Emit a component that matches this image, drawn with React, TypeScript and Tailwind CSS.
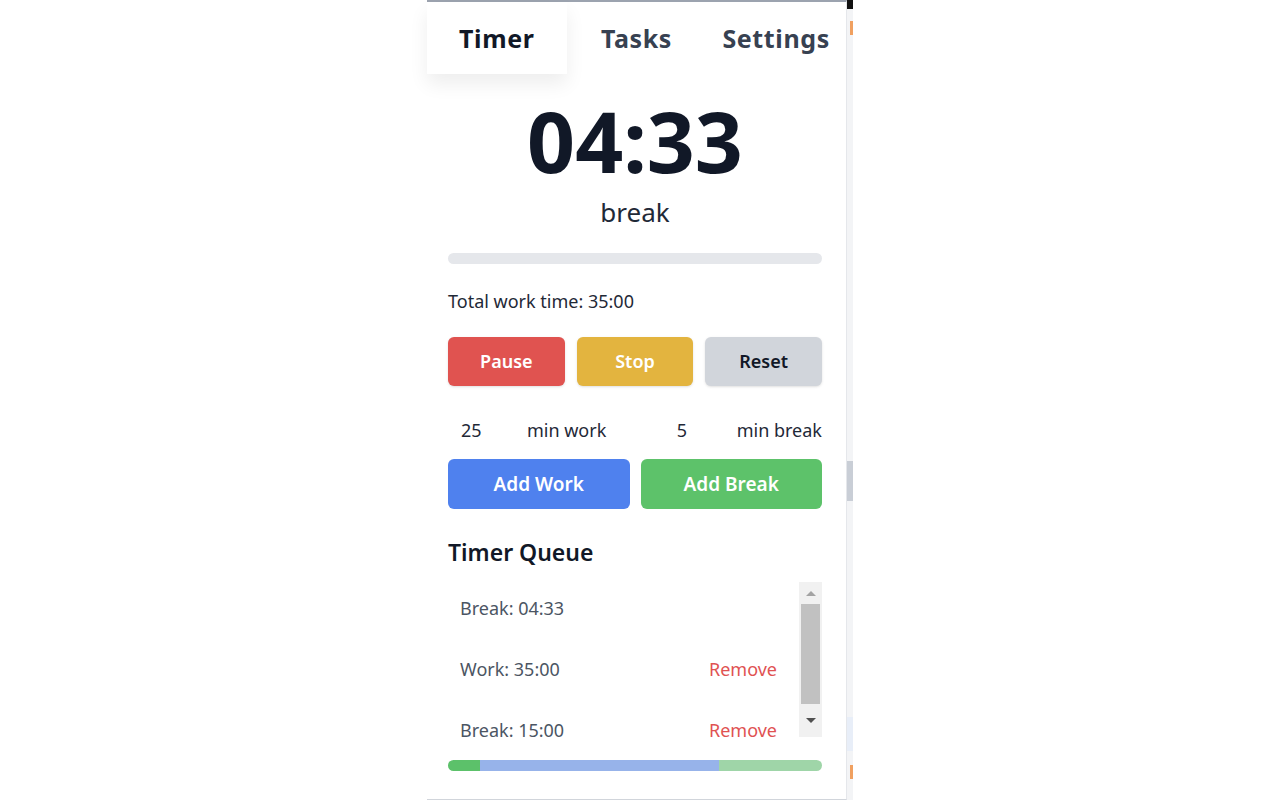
import React from "react";

const font = { fontFamily: '"Noto Sans", "Open Sans", Arial, sans-serif' };

function Tab({ label, active = false }: { label: string; active?: boolean }) {
  return (
    <div
      className={
        active
          ? "flex items-center justify-center bg-white pt-[2px] text-[25px] font-bold tracking-wide text-[#111827] shadow-[0_10px_18px_rgba(0,0,0,0.07)]"
          : "flex items-center justify-center pt-[2px] text-[25px] font-bold tracking-wide text-[#374151]"
      }
    >
      {label}
    </div>
  );
}

function QueueItem({ label, removable }: { label: string; removable: boolean }) {
  return (
    <div className="flex h-[52px] shrink-0 items-center justify-between pl-3 pr-[22px] text-[18px] text-[#4b5563]">
      <span>{label}</span>
      {removable && <span className="text-[#e05252]">Remove</span>}
    </div>
  );
}

export default function App() {
  return (
    <div className="flex min-h-screen justify-center bg-white" style={font}>
      <div className="flex h-[800px] w-[420px] flex-col border-t-2 border-r border-b border-[#9ca3af] border-r-[#e5e7eb] border-b-[#d1d5db] bg-white">
        <div className="grid h-[72px] grid-cols-3">
          <Tab label="Timer" active />
          <Tab label="Tasks" />
          <Tab label="Settings" />
        </div>

        <div className="flex flex-col pl-[21px] pr-[24px]">
          <div className="mt-[25px] text-center text-[84px] leading-[84px] font-bold text-[#111827]">04:33</div>
          <div className="mt-[12px] text-center text-[26px] leading-[34px] text-[#1f2937]">break</div>

          <div className="mt-[24px] h-[11px] rounded-full bg-[#e5e7eb]" />

          <div className="mt-[24px] text-[18px] leading-[26px] text-[#1f2937]">Total work time: 35:00</div>

          <div className="mt-[23px] grid grid-cols-3 gap-3">
            <button className="h-[49px] rounded-md bg-[#e05350] text-[18px] font-semibold text-white shadow-sm">Pause</button>
            <button className="h-[49px] rounded-md bg-[#e3b43f] text-[18px] font-semibold text-white shadow-sm">Stop</button>
            <button className="h-[49px] rounded-md bg-[#d1d5db] text-[18px] font-semibold text-[#111827] shadow-sm">Reset</button>
          </div>

          <div className="mt-[30px] flex h-[28px] items-center whitespace-nowrap text-[18px] text-[#1f2937]">
            <span className="w-[79px] pl-[13px]">25</span>
            <span className="w-[150px]">min work</span>
            <span className="w-[60px]">5</span>
            <span>min break</span>
          </div>

          <div className="mt-[15px] grid grid-cols-2 gap-[11px]">
            <button className="h-[50px] rounded-md bg-[#4f81ee] text-[19px] font-semibold text-white">Add Work</button>
            <button className="h-[50px] rounded-md bg-[#5dc26a] text-[19px] font-semibold text-white">Add Break</button>
          </div>

          <div className="mt-[28px] text-[23px] leading-[30px] font-semibold text-[#111827]">Timer Queue</div>

          <div className="mt-[15px] flex h-[155px]">
            <div className="flex flex-1 flex-col gap-[9px]">
              <QueueItem label="Break: 04:33" removable={false} />
              <QueueItem label="Work: 35:00" removable />
              <QueueItem label="Break: 15:00" removable />
            </div>
            <div className="flex w-[23px] flex-col items-center bg-[#f1f1f1]">
              <div className="flex h-[22px] items-center justify-center">
                <div className="h-0 w-0 border-x-[5px] border-b-[5px] border-x-transparent border-b-[#a3a3a3]" />
              </div>
              <div className="h-[100px] w-[19px] bg-[#c1c1c1]" />
              <div className="flex flex-1 items-center justify-center">
                <div className="h-0 w-0 border-x-[5px] border-t-[5px] border-x-transparent border-t-[#505050]" />
              </div>
            </div>
          </div>

          <div className="mt-[23px] flex h-[11px] overflow-hidden rounded-full">
            <div className="w-[32px] bg-[#5cc16a]" />
            <div className="w-[239px] bg-[#97b3ea]" />
            <div className="flex-1 bg-[#9fd5a8]" />
          </div>
        </div>
      </div>

      <div className="flex h-[800px] w-[6px] flex-col bg-[#f3f4f6]">
        <div className="h-[9px] bg-[#111111]" />
        <div className="mt-[12px] ml-[3px] h-[14px] w-[3px] bg-[#f0a060]" />
        <div className="mt-[426px] h-[40px] bg-[#c9ced6]" />
        <div className="mt-[216px] h-[34px] bg-[#e8eef8]" />
        <div className="mt-[14px] ml-[3px] h-[14px] w-[3px] bg-[#f0a060]" />
      </div>
    </div>
  );
}
